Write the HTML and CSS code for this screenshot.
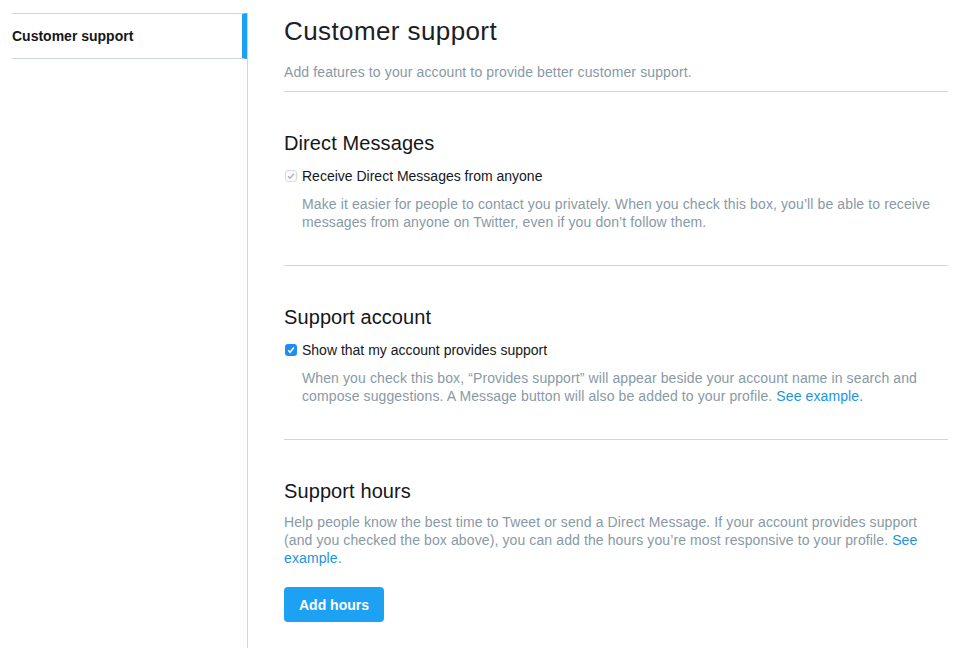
FILE: index.html
```html
<!DOCTYPE html>
<html lang="en">
<head>
  <meta charset="UTF-8">
  <title>Customer support</title>
  <link rel="stylesheet" href="styles.css">
</head>
<body>
  <aside class="sidebar">
    <a class="sidebar-item active" href="#">Customer support</a>
  </aside>
  <main class="content">
    <header class="page-header">
      <h1>Customer support</h1>
      <p class="subtitle">Add features to your account to provide better customer support.</p>
    </header>

    <section class="setting">
      <h2>Direct Messages</h2>
      <label class="check-row">
        <span class="box box-disabled">
          <svg viewBox="0 0 12 12" width="12" height="12"><path d="M3 6.3l2 2 4-4.6" fill="none" stroke="#a8b3bb" stroke-width="1.3"/></svg>
        </span>
        Receive Direct Messages from anyone
      </label>
      <p class="desc indent">Make it easier for people to contact you privately. When you check this box, you’ll be able to receive messages from anyone on Twitter, even if you don’t follow them.</p>
    </section>

    <section class="setting">
      <h2>Support account</h2>
      <label class="check-row">
        <span class="box box-checked">
          <svg viewBox="0 0 12 12" width="12" height="12"><path d="M3.2 6.2l1.9 2 3.8-4.6" fill="none" stroke="#fff" stroke-width="1.6"/></svg>
        </span>
        Show that my account provides support
      </label>
      <p class="desc indent">When you check this box, “Provides support” will appear beside your account name in search and compose suggestions. A Message button will also be added to your profile. <a href="#">See example.</a></p>
    </section>

    <section class="setting last">
      <h2>Support hours</h2>
      <p class="desc">Help people know the best time to Tweet or send a Direct Message. If your account provides support (and you checked the box above), you can add the hours you’re most responsive to your profile. <a href="#">See example.</a></p>
      <button class="btn">Add hours</button>
    </section>
  </main>
</body>
</html>
```

FILE: styles.css
```css
body {
  margin: 0;
  display: flex;
  font-family: "Liberation Sans", Arial, sans-serif;
  color: #14171a;
  background: #fff;
}
.sidebar {
  width: 235px;
  margin-left: 12px;
  margin-top: 13px;
  min-height: 634px;
  border-right: 1px solid #ccd6dd;
}
.sidebar-item {
  display: block;
  height: 44px;
  line-height: 44px;
  border-top: 1px solid #ccd6dd;
  border-bottom: 1px solid #ccd6dd;
  border-right: 5px solid #1da1f2;
  font-size: 14px;
  font-weight: bold;
  color: #14171a;
  text-decoration: none;
}
.content {
  width: 664px;
  padding-left: 36px;
}
.page-header {
  padding-top: 15px;
  padding-bottom: 10px;
  border-bottom: 1px solid #ccd6dd;
}
.page-header h1 {
  margin: 0;
  font-size: 26px;
  line-height: 32px;
  font-weight: normal;
  letter-spacing: 0.4px;
  color: #1c2024;
}
.subtitle {
  margin: 16px 0 0;
  font-size: 14px;
  line-height: 18px;
  letter-spacing: 0.12px;
  color: #8899a6;
}
.setting {
  padding-top: 39px;
  padding-bottom: 34px;
  border-bottom: 1px solid #ccd6dd;
}
.setting.last {
  border-bottom: none;
}
.setting h2 {
  margin: 0;
  font-size: 20px;
  line-height: 24px;
  font-weight: normal;
  letter-spacing: 0.1px;
}
.check-row {
  display: flex;
  align-items: center;
  margin-top: 12px;
  font-size: 14px;
  line-height: 18px;
}
.box {
  width: 12px;
  height: 12px;
  margin-left: 1px;
  margin-right: 5px;
  border-radius: 3px;
  box-sizing: border-box;
  display: flex;
}
.box svg {
  display: block;
}
.box-disabled {
  border: 1px solid #d4dade;
  background: #fafbfc;
}
.box-disabled svg {
  margin: -1px;
}
.box-checked {
  background: #1d8ef5;
}
.desc {
  margin: 10px 0 0;
  font-size: 14px;
  line-height: 18px;
  letter-spacing: 0.11px;
  color: #8899a6;
}
.desc.indent {
  padding-left: 18px;
}
.desc a {
  color: #1b95e0;
  text-decoration: none;
}
.btn {
  margin-top: 20px;
  height: 35px;
  padding: 0 15px;
  border: none;
  border-radius: 4px;
  background: #1da1f2;
  color: #fff;
  font-family: "Liberation Sans", Arial, sans-serif;
  font-size: 14px;
  font-weight: bold;
}
```
